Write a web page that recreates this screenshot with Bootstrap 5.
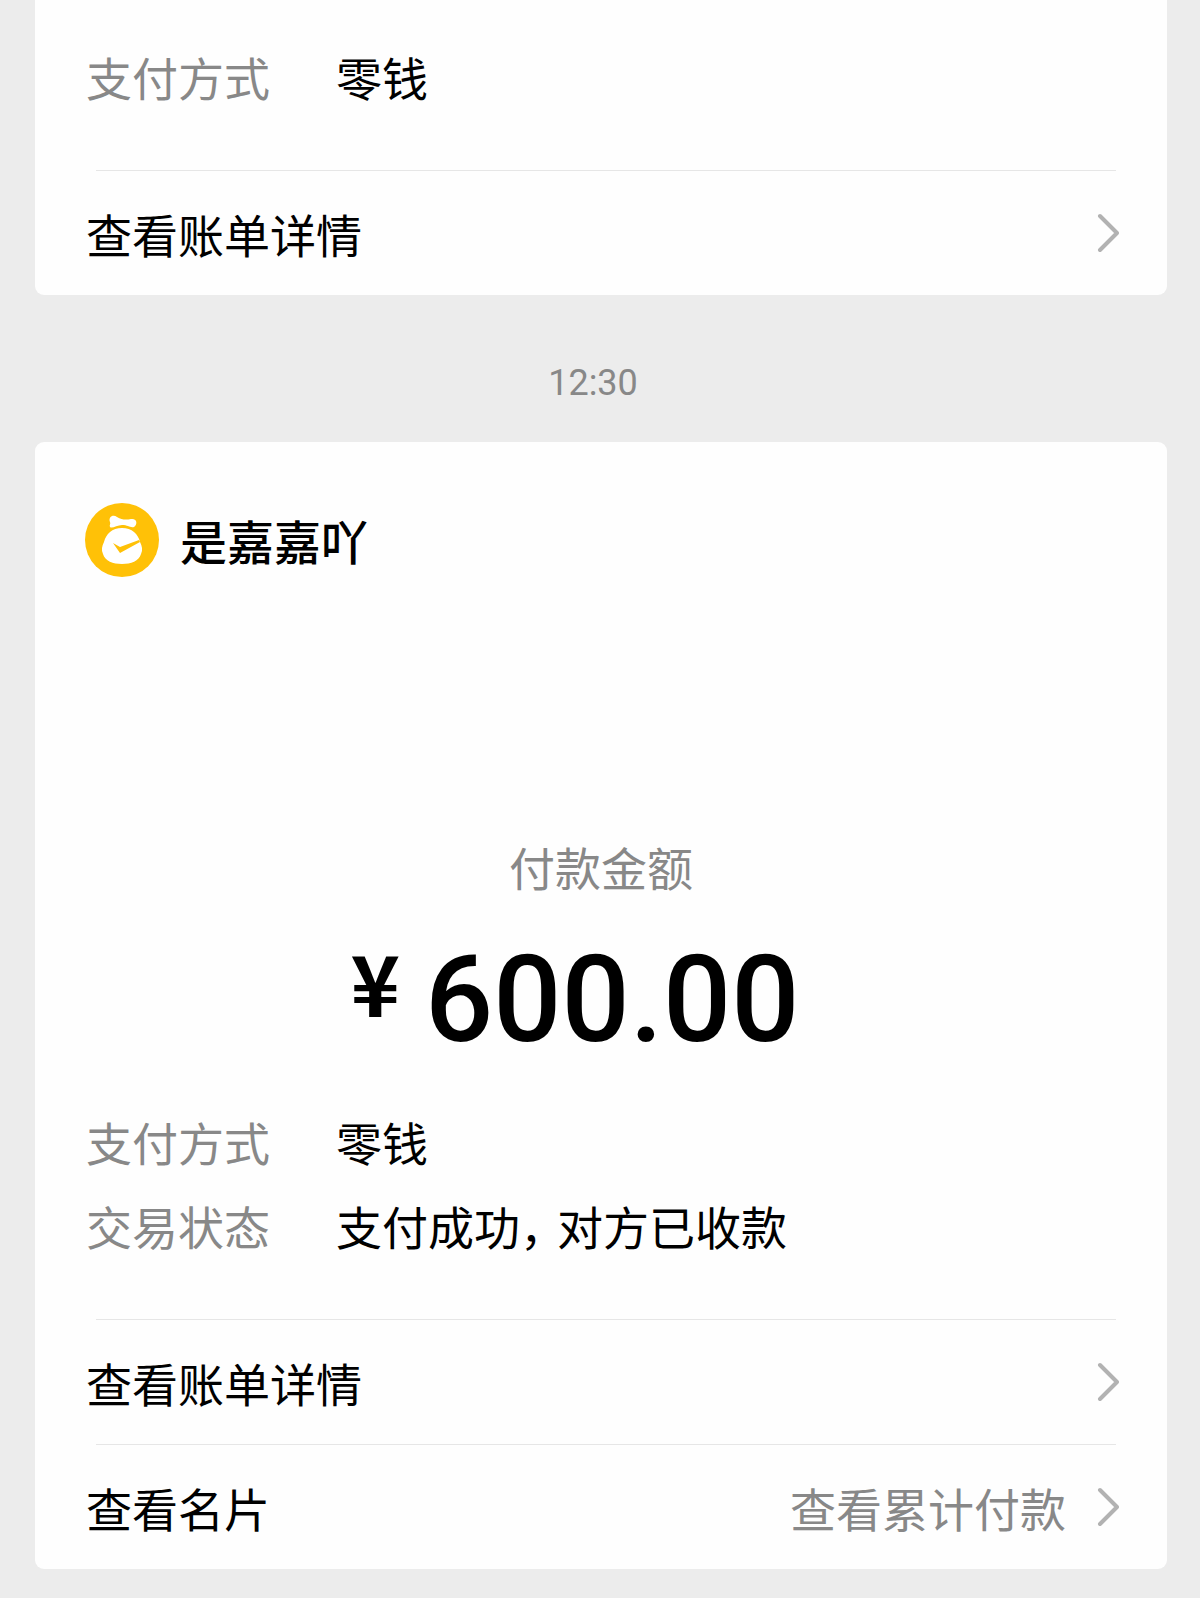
<!DOCTYPE html>
<html lang="zh-CN">
<head>
<meta charset="utf-8">
<meta name="viewport" content="width=device-width, initial-scale=1">
<title>支付消息</title>
<link rel="stylesheet" href="https://cdn.jsdelivr.net/npm/bootstrap@5.3.0/dist/css/bootstrap.min.css">
<style>
  body { background: #ececec; color: #000; font-family: "Noto Sans CJK SC", sans-serif; font-size: 46px; line-height: 60px; }
  .feed { padding: 0 33px 29px 35px; }
  .bill { background: #fefefe; border-radius: 9px; }
  .bill-cut { border-top-left-radius: 0; border-top-right-radius: 0; padding-top: 34px; }
  .soft { color: #888; }
  .facts { padding: 0 50px 52px 51px; }
  .facts dt, .facts dd { line-height: 84px; font-weight: 400; }
  .facts dt { width: 250px; }
  .pause { display: inline-block; width: 37px; font-feature-settings: "halt"; }
  .rule { height: 1px; margin: 0 51px 0 61px; background: #e6e6e6; }
  .entry { height: 124px; padding: 0 48px 0 51px; }
  .entry a { color: #000; }
  .entry a.soft { color: #888; }
  .chevron { width: 22px; height: 40px; flex: none; }
  .more { gap: 31px; }
  .stamp { height: 147px; padding: 28px 16px 0 0; font-family: Roboto, sans-serif; font-size: 36px; }
  .payee { gap: 21px; padding: 61px 50px 0; font-size: 47px; font-weight: 500; }
  .payee svg { width: 74px; height: 74px; flex: none; }
  .caption-line { margin-top: 259px; }
  .total { gap: 25px; margin: 34px 0 29px; padding-right: 52px; }
  .sign { font-size: 84px; line-height: 102px; font-weight: 700; }
  .sum { font-family: Roboto, sans-serif; font-size: 120px; line-height: 140px; font-weight: 500; }
</style>
<script src="https://cdn.jsdelivr.net/npm/bootstrap@5.3.0/dist/js/bootstrap.bundle.min.js"></script>
</head>
<body>
<main class="feed">
  <section class="bill bill-cut">
    <dl class="facts mb-0">
      <div class="d-flex"><dt class="soft">支付方式</dt><dd class="mb-0">零钱</dd></div>
    </dl>
    <div class="rule"></div>
    <div class="entry d-flex align-items-center">
      <a href="#" class="d-flex flex-fill align-items-center justify-content-between text-decoration-none">查看账单详情
        <svg class="chevron" viewBox="0 0 22 40" fill="none" stroke="#b2b2b2" stroke-width="4" stroke-linecap="round" stroke-linejoin="round" aria-hidden="true"><path d="M3 3 20 20 3 37"/></svg>
      </a>
    </div>
  </section>

  <div class="stamp soft d-flex align-items-center justify-content-center"><time>12:30</time></div>

  <section class="bill">
    <div class="payee d-flex align-items-center">
      <svg viewBox="0 0 74 74" aria-hidden="true">
        <circle cx="37" cy="37" r="37" fill="#ffc107"/>
        <path fill="#fff" d="M25 19C23 14 28 11 32 14C37 17 41 17 46 16C52 15 53 21 49 24C45 25 43 22 37 22C32 22 27 26 25 24C24 22 26 21 25 19Z"/>
        <path fill="#fff" d="M37 25C47 25 53 31 55 39C57 43 58 47 56 51C54 58 46 61 37 61C28 61 20 58 18 51C16 47 17 43 19 39C21 31 27 25 37 25Z"/>
        <path fill="#ffc107" d="M28 40 35 44 54 37 55 39 35 50Z"/>
      </svg>
      <span>是嘉嘉吖</span>
    </div>
    <div class="caption-line soft text-center">付款金额</div>
    <div class="total d-flex justify-content-center align-items-start">
      <span class="sign">¥</span><span class="sum">600.00</span>
    </div>
    <dl class="facts mb-0">
      <div class="d-flex"><dt class="soft">支付方式</dt><dd class="mb-0">零钱</dd></div>
      <div class="d-flex"><dt class="soft">交易状态</dt><dd class="mb-0">支付成功<span class="pause">，</span>对方已收款</dd></div>
    </dl>
    <div class="rule"></div>
    <div class="entry d-flex align-items-center">
      <a href="#" class="d-flex flex-fill align-items-center justify-content-between text-decoration-none">查看账单详情
        <svg class="chevron" viewBox="0 0 22 40" fill="none" stroke="#b2b2b2" stroke-width="4" stroke-linecap="round" stroke-linejoin="round" aria-hidden="true"><path d="M3 3 20 20 3 37"/></svg>
      </a>
    </div>
    <div class="rule"></div>
    <div class="entry d-flex align-items-center justify-content-between">
      <a href="#" class="text-decoration-none">查看名片</a>
      <a href="#" class="more soft d-flex align-items-center text-decoration-none">查看累计付款
        <svg class="chevron" viewBox="0 0 22 40" fill="none" stroke="#b2b2b2" stroke-width="4" stroke-linecap="round" stroke-linejoin="round" aria-hidden="true"><path d="M3 3 20 20 3 37"/></svg>
      </a>
    </div>
  </section>
</main>
</body>
</html>
